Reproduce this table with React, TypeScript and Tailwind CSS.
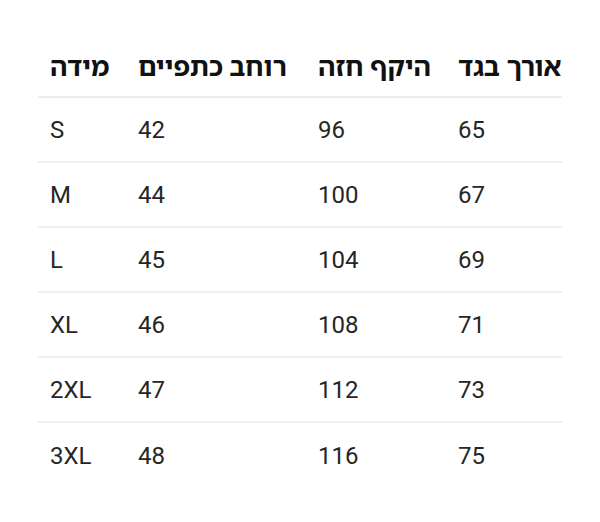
const headers = ["מידה", "רוחב כתפיים", "היקף חזה", "אורך בגד"];

const rows = [
  ["S", "42", "96", "65"],
  ["M", "44", "100", "67"],
  ["L", "45", "104", "69"],
  ["XL", "46", "108", "71"],
  ["2XL", "47", "112", "73"],
  ["3XL", "48", "116", "75"],
];

export default function App() {
  return (
    <div
      className="w-[600px] h-[522px] bg-white pt-[38px] pl-[38px]"
      style={{ fontFamily: "Roboto, 'Noto Sans Hebrew', 'Liberation Sans', sans-serif" }}
    >
      <div className="w-[524px]">
        <div className="grid grid-cols-[88px_180px_140px_116px] h-[60px] border-b-2 border-[#ededed] items-center">
          {headers.map((h) => (
            <div
              key={h}
              className="pl-3 text-[26.5px] font-bold text-[#111] whitespace-nowrap text-left"
            >
              {h}
            </div>
          ))}
        </div>
        {rows.map((r, i) => (
          <div
            key={r[0]}
            className={
              i < rows.length - 1
                ? "grid grid-cols-[88px_180px_140px_116px] h-[65px] border-b-2 border-[#f0f0f0] items-center"
                : "grid grid-cols-[88px_180px_140px_116px] h-[65px] items-center"
            }
          >
            {r.map((c, j) => (
              <div key={j} className="pl-3 text-[24px] text-[#262626]">
                {c}
              </div>
            ))}
          </div>
        ))}
      </div>
    </div>
  );
}
